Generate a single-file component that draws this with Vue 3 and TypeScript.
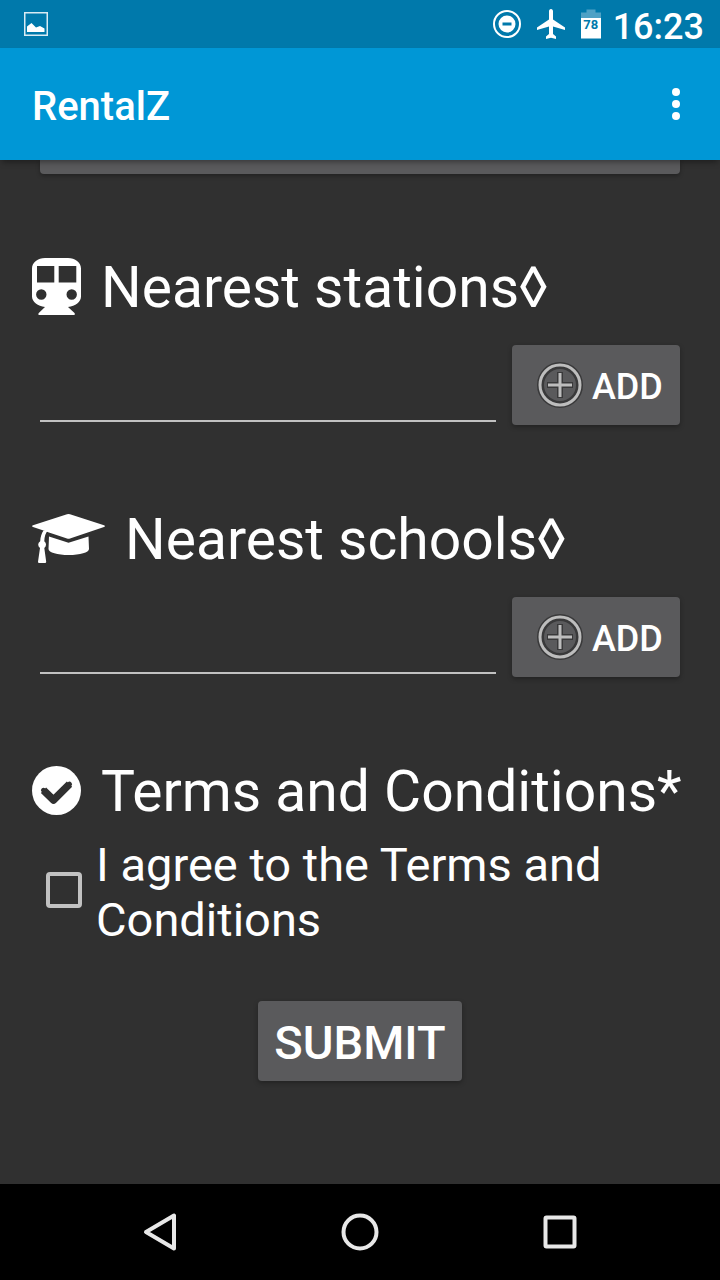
<script setup lang="ts">
import { reactive, ref } from 'vue'

interface NearbyField {
  id: 'stations' | 'schools'
  label: string
}

const fields: NearbyField[] = [
  { id: 'stations', label: 'Nearest stations◊' },
  { id: 'schools', label: 'Nearest schools◊' },
]

const values = reactive<Record<NearbyField['id'], string>>({ stations: '', schools: '' })
const agreed = ref(false)
</script>

<template>
  <div class="screen">
    <div class="status">
      <svg class="notice" width="24" height="24" viewBox="0 0 24 24" aria-hidden="true">
        <rect x="0.75" y="0.75" width="22.5" height="22.5" fill="none" stroke="#d9ebf3" stroke-width="1.5" />
        <path d="M3 14.500L7.500 11L12 15.500L16 14L20.500 16.500V20H3Z" fill="#fff" />
      </svg>
      <div class="indicators">
        <svg width="28" height="28" viewBox="0 0 28 28" aria-hidden="true">
          <circle cx="14" cy="14" r="13" fill="none" stroke="#fff" stroke-width="2" />
          <circle cx="14" cy="14" r="8.500" fill="#fff" />
          <rect x="9.500" y="12.500" width="9" height="3" fill="#0079ab" />
        </svg>
        <svg width="28" height="30" viewBox="0 0 28 30" aria-hidden="true">
          <path d="M14 0C15.300 0 16 1 16 2.300V10.500L28 18.500V21L16 17.500V25L19 27.500V30L14 28.800L9 30V27.500L12 25V17.500L0 21V18.500L12 10.500V2.300C12 1 12.700 0 14 0Z" fill="#fff" />
        </svg>
        <span class="battery">
          <svg width="20" height="30" viewBox="0 0 20 30" aria-hidden="true">
            <path d="M5.500 0.500H14.500V3.500H20V9.500H0V3.500H5.500Z" fill="#4fa1c5" />
            <rect x="0" y="9" width="20" height="20.500" fill="#fff" />
          </svg>
          <span class="level">78</span>
        </span>
        <time class="clock">16:23</time>
      </div>
    </div>

    <header class="bar">
      <h1>RentalZ</h1>
      <button class="more" type="button" aria-label="More options">
        <svg width="8" height="32" viewBox="0 0 8 32" fill="#fff" aria-hidden="true">
          <circle cx="4" cy="4" r="4" />
          <circle cx="4" cy="16" r="4" />
          <circle cx="4" cy="28" r="4" />
        </svg>
      </button>
    </header>

    <main class="content">
      <div class="edge"></div>

      <section v-for="field in fields" :key="field.id">
        <label class="heading" :for="field.id">
          <svg v-if="field.id === 'stations'" width="49" height="57" viewBox="0 0 49 57" aria-hidden="true">
            <path
              fill="#fff"
              fill-rule="evenodd"
              d="M13 0H36C43 0 49 4.500 49 10.500V38.500C49 44 43.500 48 36 49L42.500 55C43.200 56 43 57 42 57H7.500C6 57 6 56 6.800 55L13 49C6 48 0 44 0 38.500V10.500C0 4.500 6 0 13 0ZM5 8V24.500H22.300V8ZM26.700 8V24.500H44.300V8ZM9.300 31.300A5.200 5.200 0 1 0 9.300 41.700A5.200 5.200 0 1 0 9.300 31.300ZM39.700 31.300A5.200 5.200 0 1 0 39.700 41.700A5.200 5.200 0 1 0 39.700 31.300Z"
            />
          </svg>
          <svg v-else width="73" height="49" viewBox="0 0 73 49" fill="#fff" aria-hidden="true">
            <path d="M35 0.300Q36.500 -0.200 38 0.300L72 11.200Q74 12 72 13L38 24.400Q36.500 24.900 35 24.400L16.200 18.200L14.500 17.500L1 13Q-1 12 1 11.200Z" />
            <path d="M17 22.500L36.500 28.800L56.500 22.500L57 35C57 38.500 48 41 36.800 41C25.500 41 16.500 38.500 16.500 35Z" />
            <path d="M11.500 16.500H16C13.500 19 12.400 22.500 12.300 27.300Q14 28.600 14 30.600Q14 32.700 12.300 34L14.200 47.800Q14.300 49 13 49H7.200Q5.900 49 6 47.800L8 34Q6.200 32.700 6.200 30.600Q6.200 28.400 8.200 27.200C8.400 23 9.500 19.500 11.500 16.500Z" />
          </svg>
          <span>{{ field.label }}</span>
        </label>
        <div class="entry">
          <input :id="field.id" v-model="values[field.id]" class="text" type="text" />
          <button class="raised add" type="button">
            <svg width="64" height="64" viewBox="0 0 64 64" fill="none" aria-hidden="true">
              <circle cx="32" cy="32" r="19.500" stroke="#39393a" stroke-width="7" />
              <path d="M32 19V45M19 32H45" stroke="#39393a" stroke-width="6" />
              <circle cx="32" cy="32" r="20" stroke="#bdbdbd" stroke-width="3" />
              <path d="M32 20V44M20 32H44" stroke="#bdbdbd" stroke-width="3" />
            </svg>
            <span>ADD</span>
          </button>
        </div>
      </section>

      <section>
        <h2 class="heading">
          <svg width="49" height="49" viewBox="0 0 49 49" aria-hidden="true">
            <circle cx="24.500" cy="24.500" r="24.500" fill="#fff" />
            <path d="M11.500 24.300L21.500 34L37.500 18.200" fill="none" stroke="#303030" stroke-width="7.500" stroke-linejoin="round" />
            <path d="M11.500 24.300L21.500 34L37.500 18.200" fill="none" stroke="#303030" stroke-width="5" stroke-linecap="round" />
          </svg>
          <span>Terms and Conditions*</span>
        </h2>
        <label class="agree">
          <input v-model="agreed" type="checkbox" />
          <span>I agree to the Terms and Conditions</span>
        </label>
      </section>

      <button class="raised submit" type="submit">SUBMIT</button>
    </main>

    <nav class="nav" aria-label="System">
      <button type="button" aria-label="Back">
        <svg width="40" height="40" viewBox="0 0 40 40" aria-hidden="true">
          <path d="M6 20L34 3.500V36.500Z" fill="none" stroke="#e8e8e8" stroke-width="4" stroke-linejoin="round" />
        </svg>
      </button>
      <button type="button" aria-label="Home">
        <svg width="40" height="40" viewBox="0 0 40 40" aria-hidden="true">
          <circle cx="20" cy="20" r="16.500" fill="none" stroke="#e8e8e8" stroke-width="4" />
        </svg>
      </button>
      <button type="button" aria-label="Recent apps">
        <svg width="40" height="40" viewBox="0 0 40 40" aria-hidden="true">
          <rect x="5.500" y="5.500" width="29" height="29" rx="1" fill="none" stroke="#e8e8e8" stroke-width="4" />
        </svg>
      </button>
    </nav>
  </div>
</template>

<style>
body {
  margin: 0;
  background: #303030;
}
</style>

<style scoped>
.screen {
  display: flex;
  flex-direction: column;
  min-height: 100vh;
  background: #303030;
  color: #fff;
  font-family: Roboto, "Liberation Sans", sans-serif;
}

svg {
  display: block;
  flex: none;
}

button {
  padding: 0;
  border: 0;
  background: none;
  color: inherit;
  font: inherit;
}

.status {
  display: flex;
  align-items: center;
  justify-content: space-between;
  height: 48px;
  padding: 0 16px 0 24px;
  background: #0079ab;
}

.indicators {
  display: flex;
  align-items: center;
  gap: 16px;
}

.battery {
  position: relative;
  margin-right: -4px;
}

.level {
  position: absolute;
  top: 8px;
  left: 0;
  width: 20px;
  color: #0079ab;
  font-size: 13px;
  font-weight: 700;
  line-height: 16px;
  text-align: center;
}

.clock {
  font-size: 36px;
  font-weight: 500;
  line-height: 48px;
  padding-top: 6px;
}

.bar {
  position: relative;
  z-index: 1;
  display: flex;
  align-items: center;
  justify-content: space-between;
  height: 112px;
  padding: 0 40px 0 32px;
  background: #0097d6;
  box-shadow: 0 4px 6px -2px rgba(0, 0, 0, 0.4);
}

.bar h1 {
  margin: 0;
  padding-top: 6px;
  font-size: 40px;
  font-weight: 500;
  line-height: 48px;
}

.content {
  display: flex;
  flex: 1;
  flex-direction: column;
  padding: 0 40px 80px;
}

.edge {
  height: 14px;
  margin-bottom: 79px;
  border-radius: 0 0 4px 4px;
  background: #5a5a5c;
  box-shadow: 0 2px 4px rgba(0, 0, 0, 0.3);
}

section + section {
  margin-top: 80px;
}

.heading {
  display: flex;
  align-items: center;
  gap: 20px;
  height: 68px;
  box-sizing: border-box;
  margin: 0 -8px;
  padding-bottom: 2px;
  font-size: 57px;
  font-weight: 400;
  line-height: 60px;
  white-space: nowrap;
}

.heading span {
  padding-top: 4px;
}

.entry {
  display: flex;
  gap: 16px;
  margin-top: 24px;
}

.text {
  flex: 1;
  min-width: 0;
  height: 77px;
  box-sizing: border-box;
  padding: 0 8px;
  border: 0;
  border-bottom: 2px solid #c1c1c1;
  border-radius: 0;
  outline: 0;
  background: none;
  color: #fff;
  font: 36px Roboto, "Liberation Sans", sans-serif;
}

.raised {
  border-radius: 4px;
  background: #5a5a5c;
  box-shadow: 0 2px 5px rgba(0, 0, 0, 0.3);
  font-weight: 500;
  height: 80px;
  padding: 0 16px;
}

.add {
  display: flex;
  align-items: center;
  min-width: 168px;
  font-size: 36px;
}

.add span {
  padding-top: 4px;
}

.agree {
  display: flex;
  align-items: center;
  gap: 14px;
  margin: 12px 0 0 6px;
  font-size: 47px;
  line-height: 55px;
}

.agree input {
  flex: none;
  width: 36px;
  height: 36px;
  box-sizing: border-box;
  margin: 0 0 4px;
  appearance: none;
  border: 4px solid #c1c1c1;
  border-radius: 4px;
}

.agree input:checked {
  background: #c1c1c1;
}

.submit {
  align-self: center;
  margin-top: 54px;
  padding-top: 2px;
  font-size: 47px;
}

.nav {
  display: flex;
  align-items: center;
  justify-content: center;
  gap: 160px;
  height: 96px;
  background: #000;
}
</style>
